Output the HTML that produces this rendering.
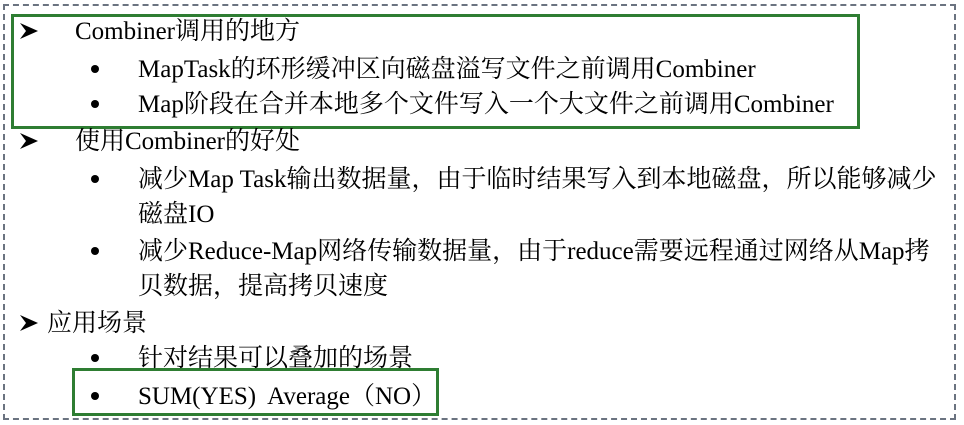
<!DOCTYPE html>
<html><head><meta charset="utf-8"><style>
html,body{margin:0;padding:0;background:#fff;width:964px;height:425px;overflow:hidden;position:relative}
.dash{position:absolute;left:3px;top:4px;width:953px;height:416px;border:2px dashed #6b7380;box-sizing:border-box}
.g{position:absolute;border:3px solid #2e7d32;box-sizing:border-box}
.l{position:absolute;height:36px;line-height:36px;font-family:"Liberation Serif","Noto Serif CJK SC",serif;font-size:25px;color:#000;white-space:nowrap}
.a{position:absolute;width:18px;height:16px}
.b{position:absolute;width:8px;height:8px;border-radius:50%;background:#000}
</style></head><body>
<div class="dash"></div>
<div class="g" style="left:11px;top:14px;width:849px;height:115px"></div>
<div class="g" style="left:72px;top:368px;width:367px;height:48px"></div>

<svg class="a" style="left:20px;top:23px" viewBox="0 0 18 16"><path d="M0 0 L18 8 L0 16 L6 8 Z" fill="#000"/></svg>
<div class="l" style="left:75px;top:14px">Combiner调用的地方</div>
<div class="b" style="left:91px;top:65px"></div><div class="l" style="left:138px;top:52px">MapTask的环形缓冲区向磁盘溢写文件之前调用Combiner</div>
<div class="b" style="left:91px;top:100px"></div><div class="l" style="left:138px;top:87px">Map阶段在合并本地多个文件写入一个大文件之前调用Combiner</div>
<svg class="a" style="left:20px;top:133px" viewBox="0 0 18 16"><path d="M0 0 L18 8 L0 16 L6 8 Z" fill="#000"/></svg>
<div class="l" style="left:75px;top:124px">使用Combiner的好处</div>
<div class="b" style="left:91px;top:175px"></div><div class="l" style="left:138px;top:162px">减少Map Task输出数据量，由于临时结果写入到本地磁盘，所以能够减少</div>
<div class="l" style="left:138px;top:197px">磁盘IO</div>
<div class="b" style="left:91px;top:247px"></div><div class="l" style="left:138px;top:234px">减少Reduce-Map网络传输数据量，由于reduce需要远程通过网络从Map拷</div>
<div class="l" style="left:138px;top:269px">贝数据，提高拷贝速度</div>
<svg class="a" style="left:20px;top:315px" viewBox="0 0 18 16"><path d="M0 0 L18 8 L0 16 L6 8 Z" fill="#000"/></svg>
<div class="l" style="left:47px;top:306px">应用场景</div>
<div class="b" style="left:91px;top:354px"></div><div class="l" style="left:138px;top:341px">针对结果可以叠加的场景</div>
<div class="b" style="left:91px;top:392px"></div><div class="l" style="left:138px;top:379px">SUM(YES)&nbsp; Average（NO）</div>
</body></html>
